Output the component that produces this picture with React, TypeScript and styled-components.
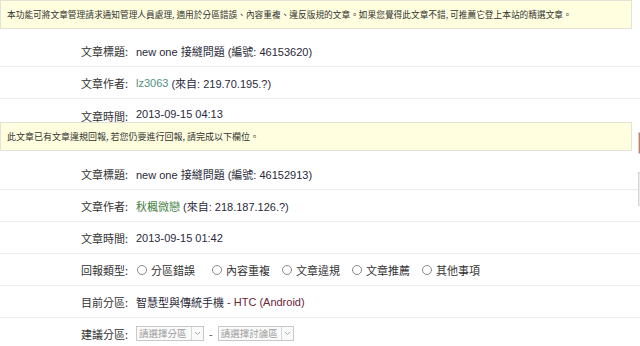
import styled, { createGlobalStyle } from "styled-components";

const GlobalStyle = createGlobalStyle`
  html, body {
    margin: 0;
    padding: 0;
    background: #fff;
  }
  body {
    font-family: "Liberation Sans", "Noto Sans CJK TC", Arial, sans-serif;
    color: #333;
    overflow: hidden;
  }
`;

const Page = styled.div`
  position: relative;
  width: 640px;
  height: 346px;
  overflow: hidden;
`;

const Notice = styled.div<{ size?: number }>`
  margin-right: 8px;
  height: 29px;
  box-sizing: border-box;
  border: 1px solid #e2e2d6;
  background-color: #ffffdf;
  padding-left: 6px;
  font-size: ${(p) => p.size || 9}px;
  line-height: 27px;
  color: #333;
  font-family: "Noto Sans CJK TC", sans-serif;
  white-space: nowrap;
`;

const Section = styled.div<{ top: number }>`
  padding-top: ${(p) => p.top}px;
`;

const Row = styled.div<{ h?: number; last?: boolean }>`
  display: flex;
  align-items: center;
  height: ${(p) => p.h || 31}px;
  border-bottom: ${(p) => (p.last ? "none" : "1px solid #ececec")};
  font-size: 11px;
`;

const ShortRow = styled(Row)`
  align-items: flex-start;
  padding-top: 9px;
  box-sizing: border-box;
`;

const Label = styled.div`
  width: 128px;
  text-align: right;
  padding-right: 8px;
  font-family: "Noto Sans CJK TC", sans-serif;
  color: #333;
  flex-shrink: 0;
`;

const Value = styled.div`
  display: flex;
  align-items: center;
  color: #2a2a3a;
  white-space: nowrap;
`;

const Cjk = styled.span`
  font-family: "Noto Sans CJK TC", sans-serif;
`;

const Author = styled.span<{ tone: string }>`
  color: ${(p) => p.tone};
  margin-right: 3px;
`;

const Forum = styled.span`
  color: #6a2436;
  margin-left: 3px;
`;

const RadioGroup = styled.div`
  display: flex;
  align-items: center;
  font-family: "Noto Sans CJK TC", sans-serif;
  margin-left: 1px;
`;

const Option = styled.label<{ w: number }>`
  display: flex;
  align-items: center;
  width: ${(p) => p.w}px;
  gap: 4px;
`;

const Radio = styled.span`
  display: inline-block;
  width: 8px;
  height: 8px;
  border: 1px solid #8a8a8a;
  border-radius: 50%;
  background: #fff;
`;

const Select = styled.div<{ w: number }>`
  display: flex;
  align-items: stretch;
  width: ${(p) => p.w}px;
  height: 15px;
  box-sizing: border-box;
  border: 1px solid #c8c8c8;
  background: #fafafa;
  font-family: "Noto Sans CJK TC", sans-serif;
  font-size: 9.5px;
  line-height: 13px;
  color: #9a9a9a;
`;

const SelectText = styled.span`
  flex: 1;
  padding-left: 2px;
  white-space: nowrap;
`;

const SelectArrow = styled.span`
  width: 11px;
  border-left: 1px solid #d6d6d6;
  display: flex;
  align-items: center;
  justify-content: center;
`;

const Dash = styled.span`
  margin: 0 5px;
  color: #555;
`;

const SideTab = styled.div<{ top: number; h: number; bg: string }>`
  position: absolute;
  left: 638px;
  top: ${(p) => p.top}px;
  width: 10px;
  height: ${(p) => p.h}px;
  background: ${(p) => p.bg};
  border: 1px solid #d4d4d4;
`;

const Arrow = () => (
  <svg width="7" height="5" viewBox="0 0 7 5">
    <path d="M1 1 L3.5 3.5 L6 1" fill="none" stroke="#aaa" strokeWidth="1" />
  </svg>
);

const types = ["分區錯誤", "內容重複", "文章違規", "文章推薦", "其他事項"];

export default function App() {
  return (
    <>
      <GlobalStyle />
      <Page>
        <Notice size={8.7}>
          本功能可將文章管理請求通知管理人員處理, 適用於分區錯誤、內容重複、違反版規的文章。如果您覺得此文章不錯, 可推薦它登上本站的精選文章。
        </Notice>
        <Section top={6}>
          <Row>
            <Label>文章標題:</Label>
            <Value>new one 接縫問題 (編號: 46153620)</Value>
          </Row>
          <Row>
            <Label>文章作者:</Label>
            <Value>
              <Author tone="#4f8f80">lz3063</Author>(來自: 219.70.195.?)
            </Value>
          </Row>
          <ShortRow h={23} last>
            <Label>文章時間:</Label>
            <Value>2013-09-15 04:13</Value>
          </ShortRow>
        </Section>
        <Notice>此文章已有文章違規回報, 若您仍要進行回報, 請完成以下欄位。</Notice>
        <Section top={7}>
          <Row>
            <Label>文章標題:</Label>
            <Value>new one 接縫問題 (編號: 46152913)</Value>
          </Row>
          <Row>
            <Label>文章作者:</Label>
            <Value>
              <Author tone="#3f7d3f">秋楓微戀</Author>(來自: 218.187.126.?)
            </Value>
          </Row>
          <Row>
            <Label>文章時間:</Label>
            <Value>2013-09-15 01:42</Value>
          </Row>
          <Row>
            <Label>回報類型:</Label>
            <RadioGroup>
              {types.map((t, i) => (
                <Option key={t} w={i === 0 ? 75 : 70}>
                  <Radio />
                  {t}
                </Option>
              ))}
            </RadioGroup>
          </Row>
          <Row>
            <Label>目前分區:</Label>
            <Value>
              <Cjk>智慧型與傳統手機</Cjk>
              <Forum>- HTC (Android)</Forum>
            </Value>
          </Row>
          <Row last>
            <Label>建議分區:</Label>
            <Value>
              <Select w={68}>
                <SelectText>請選擇分區</SelectText>
                <SelectArrow>
                  <Arrow />
                </SelectArrow>
              </Select>
              <Dash>-</Dash>
              <Select w={76}>
                <SelectText>請選擇討論區</SelectText>
                <SelectArrow>
                  <Arrow />
                </SelectArrow>
              </Select>
            </Value>
          </Row>
        </Section>
        <SideTab top={132} h={20} bg="#d9784c" />
        <SideTab top={172} h={32} bg="#ececec" />
      </Page>
    </>
  );
}
